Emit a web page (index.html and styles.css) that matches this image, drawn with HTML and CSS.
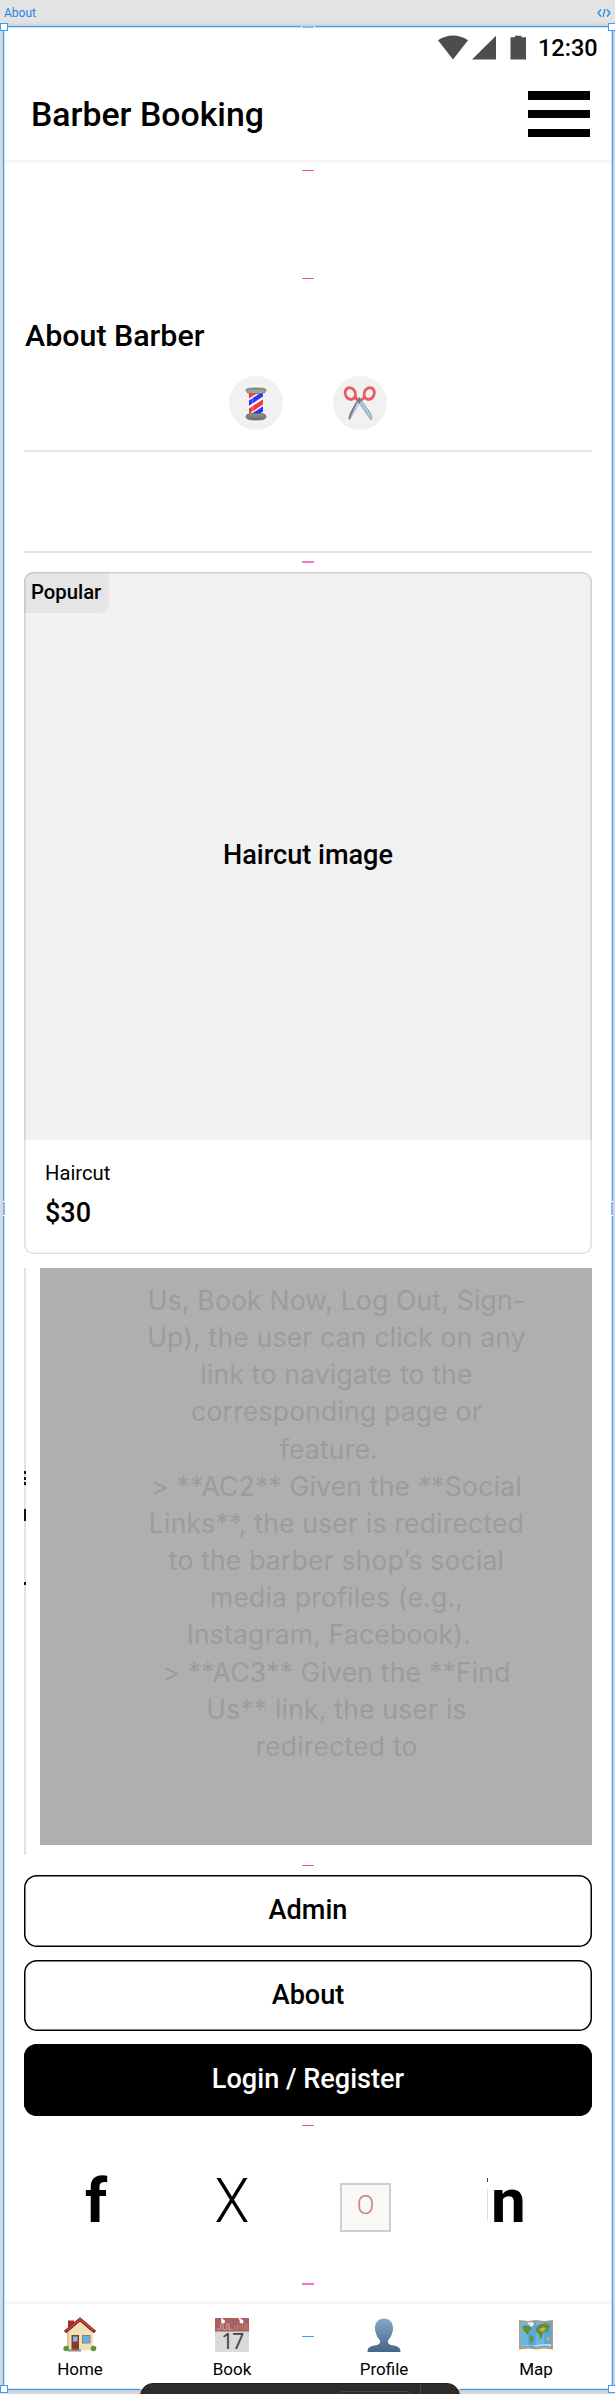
FILE: index.html
```html
<!DOCTYPE html>
<html lang="en">
<head>
<meta charset="utf-8">
<title>Barber Booking</title>
<link rel="stylesheet" href="styles.css">
</head>
<body>
<div class="canvas">
  <div class="frame-label"><span>About</span>
    <svg width="14" height="10" viewBox="0 0 14 10" fill="none" stroke="#2383e2" stroke-width="1.2"><path d="M4 1.5L1 5l3 3.5M10 1.5L13 5l-3 3.5M8 1L6 9"/></svg>
  </div>
  <main class="frame">
    <header class="header">
      <div class="status">
        <svg width="90" height="26" viewBox="0 0 90 26" fill="#4d4d4d"><path d="M0 5.2Q15-4 30 5.2L15 24.5zM34 24.5L58 .8v23.7zM72.500 2.300h4.500v-1.500h6.500v1.500h4.500v22.200h-15.500z"/></svg>
        <span class="time">12:30</span>
      </div>
      <div class="titlebar">
        <h1>Barber Booking</h1>
        <div class="burger"><i></i><i></i><i></i></div>
      </div>
    </header>
    <section class="about">
      <h2>About Barber</h2>
      <div class="badges">
        <div class="circle">
          <svg width="54" height="54" viewBox="0 0 54 54">
            <defs><clipPath id="pole"><path d="M20 17h14v21H20z"/></clipPath>
            <linearGradient id="metal" x2="0" y2="1"><stop stop-color="#8b8c87"/><stop offset=".45" stop-color="#e3e3df"/><stop offset="1" stop-color="#6a6b66"/></linearGradient></defs>
            <g clip-path="url(#pole)"><path fill="#fff" d="M20 17h14v21H20z"/><path d="M18 21l18-11M18 36.500l18-12M18 50l18-12" stroke="#ee3b35" stroke-width="4.500"/><path d="M18 28.500l18-12M18 43.500l18-12" stroke="#3432f5" stroke-width="4.500"/><path d="M23.500 17v21" stroke="#fff" stroke-width="1.500" opacity=".25"/></g>
            <path d="M17 14q0-2 10-2t10 2q0 3-4 3.500H21Q17 17 17 14zM21 37.500h12q4 .5 4 3.500t-10 3-10-3 4-3.500z" fill="url(#metal)" stroke="#62635e" stroke-width=".7"/>
          </svg>
        </div>
        <div class="circle">
          <svg width="54" height="54" viewBox="0 0 54 54">
            <path d="M24.500 23l3 3L16.500 44q-2-1 .5-7z" fill="#73777e"/><path d="M25 25l2 2-8.500 13-1.500 2z" fill="#bcd6ea"/>
            <path d="M25.500 26l2.500-2 9 12.500q3 5 1 7.500z" fill="#a9cbe3" stroke="#7a8b99" stroke-width=".7"/>
            <path d="M24 24l2-3 3 3-3 4z" fill="#777"/>
            <g fill="none" stroke="#e85b61" stroke-width="2.800"><ellipse cx="17.500" cy="17.500" rx="5" ry="6" transform="rotate(-25 17.500 18)"/><ellipse cx="36" cy="17.500" rx="5" ry="6" transform="rotate(25 36 18)"/><path d="M22 20l2 4M31.500 21l-3 3"/></g>
          </svg>
        </div>
      </div>
      <hr><hr class="second">
    </section>
    <article class="card">
      <div class="photo"><span class="tag">Popular</span><span class="photo-text">Haircut image</span></div>
      <p class="name">Haircut</p>
      <p class="price">$30</p>
    </article>
    <section class="carousel">
      <div class="sliver"><i class="s1"></i><i class="s2"></i><i class="s3"></i></div>
      <div class="note">Us, Book Now, Log Out, Sign-
Up), the user can click on any
link to navigate to the
corresponding page or
feature.&nbsp;&nbsp;
&gt; **AC2** Given the **Social
Links**, the user is redirected
to the barber shop’s social
media profiles (e.g.,
Instagram, Facebook).&nbsp;&nbsp;
&gt; **AC3** Given the **Find
Us** link, the user is
redirected to</div>
    </section>
    <section class="buttons">
      <button>Admin</button>
      <button>About</button>
      <button class="primary">Login / Register</button>
    </section>
    <section class="social">
      <div class="cell"><span class="f">f</span></div>
      <div class="cell"><span class="x">X</span></div>
      <div class="cell"><span class="o">O</span></div>
      <div class="cell linked"><i class="stem"></i><span class="n">n</span></div>
    </section>
    <nav class="nav">
      <div class="item">
        <svg width="34" height="34" viewBox="0 0 34 34">
          <path d="M5 2.500h6v12H5z" fill="#a82e29"/><path d="M4 13L17 2l13 11v19H4z" fill="#f2dfb8"/><path d="M4 14v18h2V14z" fill="#d9c39a"/>
          <path d="M2 14L17 1.500 32 14" fill="none" stroke="#5c2523" stroke-width="3.400"/><path d="M2.500 13L17 1.500 31.500 13" fill="none" stroke="#d43b3b" stroke-width="2"/>
          <path d="M8.500 17h7.500v15H8.500z" fill="#81402a"/><path d="M10 18.500h4.500v5H10z" fill="#82c1ed"/><path d="M19 17h8.500v8.500H19z" fill="#8a8271"/><path d="M20 18h6.500v6.500H20z" fill="#67b1e8"/>
          <path d="M5 31.500h13v2H5z" fill="#9a8d80"/><circle cx="3.200" cy="30.500" r="2.800" fill="#5f9440"/><circle cx="30.500" cy="30.500" r="2.800" fill="#5f9440"/>
        </svg><span>Home</span></div>
      <div class="item">
        <svg width="34" height="34" viewBox="0 0 34 34">
          <path fill="#dadada" d="M0 0h34v34H0z"/><path fill="#a96060" d="M0 0h34v13.500H0z"/><circle cx="8" cy="3.500" r="2" fill="#fff"/><circle cx="26.500" cy="3.500" r="2" fill="#fff"/><path d="M6.500 0L8 3M24 0l2.500 3" stroke="#fff" stroke-width="1.500"/>
          <path d="M20 7v5M22.500 6v6M25 7v5M27.500 6v6M30 5v7M32 5v7" stroke="#bd8585" stroke-width=".9"/>
          <text x="2" y="12" class="cal-month">JUL</text><text x="17" y="31" text-anchor="middle" class="cal-day">17</text>
        </svg><span>Book</span></div>
      <div class="item">
        <svg width="34" height="34" viewBox="0 0 34 34"><defs><linearGradient id="person" x2="0" y2="1"><stop stop-color="#83a9c9"/><stop offset="1" stop-color="#45648a"/></linearGradient></defs>
          <path d="M17 .5c5.500 0 9 4 9 9.500 0 1.500 0 3-.8 4.500-.7 3.500-2 5.500-4 7.500-.8 3 .3 4.500 4 5.200 5.500.8 8.300 2 8.300 6.800H.5c0-4.800 2.800-6 8.300-6.800 3.700-.7 4.800-2.200 4-5.200-2-2-3.300-4-4-7.500C8 13 8 11.500 8 10 8 4.500 11.500.5 17 .5z" fill="url(#person)"/></svg><span>Profile</span></div>
      <div class="item">
        <svg width="34" height="34" viewBox="0 0 34 34">
          <path d="M0 2l9 1 8-1 8 1 9-1v29.500l-9-1-8 1-8-1-9 1z" fill="#b99a77"/><path d="M1.500 3.500l7.500 1 8-1 8 1 7.500-1V29l-7.500-.5-8 1-8-1-7.500.5z" fill="#69b7e6"/>
          <path d="M9 4.500l8-1v26l-8-1zM25 4.500l7.500-1V29l-7.500-.5z" fill="#4ca0d4" opacity=".6"/>
          <path d="M3 9l3-2 4 1 3 2-2 3-2 2 1 2h-1.500L5 13zM11 17l4 2-1 4-2 3-1.500-5zM17 10l2-3 8-2 4 3-2 5-2 2-1-2-2 2-1 5-2 1-1-5-3-2z" fill="#6b8c31"/><path d="M20 11l5-2 2 2-4 3zM27 20l3-1 1 3-3 1z" fill="#d3b152"/><path d="M8 4.500l6-.5 1 3-3 2zM3 28q6-2 14 .5 8-2.500 15 0v-2q-8-1-15 1-8-1-14 0z" fill="#eaf1f4"/>
        </svg><span>Map</span></div>
    </nav>
  </main>
  <div class="toolbar"><i></i></div>
  <i class="selection"></i>
  <i class="handle tl"></i><i class="handle tr"></i><i class="handle bl"></i><i class="handle br"></i>
  <i class="edge top"></i><i class="edge left"></i><i class="edge right"></i>
  <i class="dash d1"></i><i class="dash d2"></i><i class="dash d3"></i><i class="dash d4"></i><i class="dash d5"></i><i class="dash d6"></i><i class="dash d7"></i>
</div>
</body>
</html>
```
FILE: styles.css
```css
* { box-sizing: border-box; }
body { margin: 0; font-family: Roboto, "Liberation Sans", sans-serif; color: #000; }
h1, h2, p { margin: 0; font-weight: 500; }
svg { display: block; overflow: visible; }
.canvas { position: relative; width: 615px; height: 2394px; background: #e3e3e3; overflow: hidden; }
.frame-label { height: 26px; padding: 0 4px; display: flex; justify-content: space-between; align-items: center; color: #2383e2; font-size: 12px; }
.frame { width: 608px; height: 2363px; margin-left: 4px; background: #fff; display: flex; flex-direction: column; box-shadow: 0 2px 8px rgba(0,0,0,.16); }

.header { height: 134px; box-shadow: 0 1px 5px rgba(0,0,0,.09); }
.status { height: 43px; padding: 9px 15px 0 0; display: flex; justify-content: flex-end; }
.time { width: 59px; margin-left: 10px; font-size: 23.500px; font-weight: 500; line-height: 27px; }
.titlebar { display: flex; justify-content: space-between; padding: 22px 22px 0 27px; }
h1 { font-size: 33.800px; line-height: 40px; margin-top: 4px; }
.burger { width: 62px; height: 46px; display: flex; flex-direction: column; justify-content: space-between; }
.burger i { height: 8.500px; background: #000; }

.about { height: 412px; padding: 158px 20px 0; }
h2 { font-size: 30.400px; line-height: 36px; padding-left: 1px; }
.badges { display: flex; justify-content: center; gap: 50px; margin-top: 22px; padding-right: 1px; }
.circle { width: 54px; height: 54px; border-radius: 50%; background: #f1f1f1; }
hr { border: 0; height: 2px; background: #e4e4e4; margin: 20px 0 0; }
.second { margin-top: 99px; }

.card { position: relative; margin: 0 20px 0; height: 682px; border-radius: 9px; overflow: hidden; }
.card::after { content: ""; position: absolute; inset: 0; border-radius: 9px; box-shadow: inset 0 0 0 1.600px rgba(0,0,0,.12); }
.photo { height: 568px; padding-bottom: 3px; background: #f1f1f1; display: flex; align-items: center; justify-content: center; }
.tag { position: absolute; left: 0; top: 0; width: 85px; height: 41px; padding-left: 7px; background: #e5e5e5; border-bottom-right-radius: 9px; font-size: 20.300px; font-weight: 500; line-height: 41px; }
.photo-text { font-size: 27.100px; font-weight: 500; }
.name { font-size: 20.200px; line-height: 28px; font-weight: 400; margin: 19px 0 0 21px; }
.price { font-size: 27px; line-height: 36px; margin: 8px 0 0 21px; }

.carousel { display: flex; justify-content: space-between; margin: 14px 20px 0; height: 587px; }
.sliver { width: 2px; background: #e2e2e2; display: flex; flex-direction: column; }
.sliver i { background: #111; width: 2px; }
.sliver .s1 { height: 14px; margin-top: 203px; background: repeating-linear-gradient(#111 0 3px, #ddd 3px 5.500px); }
.s2 { height: 12px; margin-top: 24px; }
.s3 { height: 3px; margin-top: 61px; }
.note { width: 552px; height: 577px; padding: 14px 0 0 41px; background: #afafaf; color: #9c9c9c; font: 400 26.500px/37.150px Inter, sans-serif; letter-spacing: .2px; text-align: center; white-space: pre; }

.buttons { margin: 20px 20px 0; display: flex; flex-direction: column; gap: 13px; }
button { height: 71.500px; flex: none; padding: 0 0 1px; border: 0; border-radius: 13px; box-shadow: inset 0 0 0 1.500px #000; background: #fff; color: #000; font: 500 27.100px Roboto, sans-serif; }
.primary { background: #000; color: #fff; }

.social { height: 188px; padding-top: 46px; display: grid; grid-template-columns: repeat(4, 152px); }
.cell { display: flex; justify-content: center; font-size: 62px; line-height: 78px; }
.f, .n { font-weight: 700; }
.f { margin-left: 32px; }
.linked { justify-content: flex-start; padding-left: 27px; }
.stem { width: 1px; height: 43px; margin-top: 16px; background: linear-gradient(#444 0 4px, transparent 4px 11px, #ddd 11px); }
.n { margin-left: 3px; }
.x { font-weight: 300; transform: scaleX(.92); }
.o { width: 51px; height: 49px; margin: 21px 0 0 -37px; border: 2px solid #cecece; background: #f9f8f7; color: #c98080; font-size: 26px; font-weight: 300; line-height: 41px; text-align: center; }

.nav { height: 85px; display: grid; grid-template-columns: repeat(4, 152px); box-shadow: 0 -1px 5px rgba(0,0,0,.09); }
.item { display: flex; flex-direction: column; align-items: center; padding-top: 14px; font-size: 17px; line-height: 24px; }
.item span { margin-top: 5px; }
.cal-month { font: 9px Roboto, sans-serif; fill: #d5aaaa; }
.cal-day { font: 21.500px "Open Sans", sans-serif; letter-spacing: -1.500px; fill: #3e3e3e; }

.toolbar { position: absolute; left: 140px; top: 2383px; width: 320px; height: 20px; background: #2c2c2c; border-radius: 13px 13px 0 0; border: 1px solid #1e1e1e; display: flex; padding: 7px 0 0 196px; }
.toolbar i { width: 74px; height: 20px; border: 1px solid #444; border-radius: 5px; }
.toolbar::after { content: ""; margin: -7px 0 0 9px; width: 1px; background: #444; }
.selection { position: absolute; left: 3px; top: 26px; width: 610px; height: 2364px; border: 1px solid #3d9df5; box-shadow: inset 0 0 0 1px #cbe6fc; clip-path: polygon(0 0, 100% 0, 100% 100%, 457px 100%, 457px 2357px, 137px 2357px, 137px 100%, 0 100%); }
.handle { position: absolute; width: 8px; height: 8px; background: #fff; border: 1px solid #3d9df5; }
.tl { left: 0; top: 23px; } .tr { left: 608px; top: 23px; } .bl { left: 0; top: 2385px; } .br { left: 608px; top: 2385px; }
.edge { position: absolute; background: #7bbcf8; border: 0 solid #fff; }
.top { left: 301px; top: 26px; width: 14px; height: 2px; border-width: 0 1px; }
.left, .right { top: 1201px; width: 2px; height: 15px; border-width: 1px 0; }
.left { left: 3px; } .right { left: 611px; }
.dash { position: absolute; left: 302px; width: 12px; height: 1px; background: #e64cb4; }
.d1 { top: 170px; } .d2 { top: 278px; } .d3 { top: 561px; height: 2px; background: #f176cb; } .d4 { top: 1865px; } .d5 { top: 2125px; } .d6 { top: 2283px; height: 2px; background: #f176cb; } .d7 { top: 2336px; background: #3d9df5; }
```
